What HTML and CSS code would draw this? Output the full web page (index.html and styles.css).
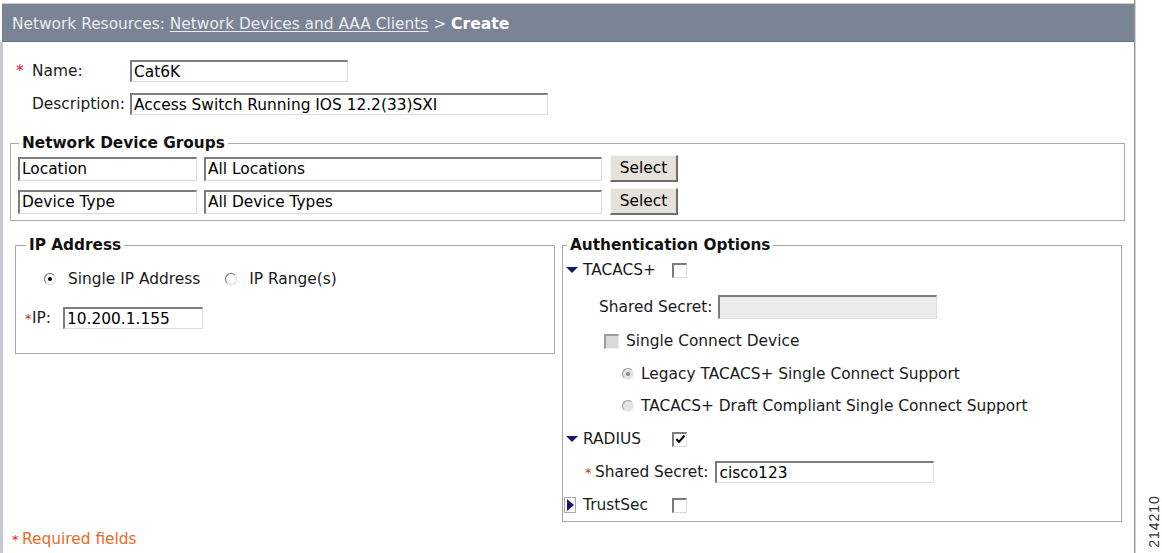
FILE: index.html
```html
<!DOCTYPE html>
<html>
<head>
<meta charset="utf-8">
<link rel="stylesheet" href="styles.css">
</head>
<body>
<div class="frame">
  <div class="header">
    <span class="crumb-label">Network Resources:</span>&nbsp;<span class="crumb-link">Network Devices and AAA Clients</span>&nbsp;<span class="crumb-sep">&gt;</span>&nbsp;<span class="crumb-current">Create</span>
  </div>
  <div class="content">
    <div class="form-row first-row">
      <span class="lbl"><span class="req">*</span>Name:</span>
      <input class="field w-name" value="Cat6K" readonly>
    </div>
    <div class="form-row">
      <span class="lbl"><span class="req"></span>Description:</span>
      <input class="field w-desc" value="Access Switch Running IOS 12.2(33)SXI" readonly>
    </div>

    <fieldset class="box ndg">
      <legend>Network Device Groups</legend>
      <div class="ndg-row">
        <input class="field tall w-grp" value="Location" readonly>
        <input class="field tall w-val" value="All Locations" readonly>
        <span class="btn">Select</span>
      </div>
      <div class="ndg-row">
        <input class="field tall w-grp" value="Device Type" readonly>
        <input class="field tall w-val" value="All Device Types" readonly>
        <span class="btn">Select</span>
      </div>
    </fieldset>

    <div class="columns">
      <fieldset class="box ip">
        <legend>IP Address</legend>
        <div class="radio-row">
          <span class="rb checked"></span><span class="rb-text">Single IP Address</span>
          <span class="rb second"></span><span class="rb-text">IP Range(s)</span>
        </div>
        <div class="ip-row">
          <span class="req small">*</span><span class="ip-lbl">IP:</span>
          <input class="field w-ip" value="10.200.1.155" readonly>
        </div>
      </fieldset>

      <fieldset class="box auth">
        <legend>Authentication Options</legend>
        <div class="opt">
          <svg class="tri" width="12" height="8" viewBox="0 0 12 8"><polygon points="0,1 12,1 6,7" fill="#141b6b"/></svg>
          <span class="proto-name">TACACS+</span>
          <span class="cb"></span>
        </div>
        <div class="opt gap13 indent-secret">
          <span class="secret-lbl">Shared Secret:</span>
          <input class="field tall w-secret disabled" value="" readonly>
        </div>
        <div class="opt gap10 indent-scd">
          <span class="cb disabled"></span>
          <span class="cb-text">Single Connect Device</span>
        </div>
        <div class="opt indent-rb">
          <span class="rb disabled checked"></span>
          <span class="rb-text2">Legacy TACACS+ Single Connect Support</span>
        </div>
        <div class="opt gap8 indent-rb">
          <span class="rb disabled"></span>
          <span class="rb-text2">TACACS+ Draft Compliant Single Connect Support</span>
        </div>
        <div class="opt">
          <svg class="tri" width="12" height="8" viewBox="0 0 12 8"><polygon points="0,1 12,1 6,7" fill="#141b6b"/></svg>
          <span class="proto-name">RADIUS</span>
          <span class="cb checked">
            <svg width="11" height="11" viewBox="0 0 11 11"><polyline points="1.5,5 4,8 9.5,1.5" fill="none" stroke="#000" stroke-width="2"/></svg>
          </span>
        </div>
        <div class="opt indent-radius">
          <span class="req small">*</span><span class="secret-lbl2">Shared Secret:</span>
          <input class="field w-secret" value="cisco123" readonly>
        </div>
        <div class="opt">
          <svg class="tri-r" width="12" height="16" viewBox="0 0 12 16"><rect x="0.5" y="0.5" width="11" height="15" fill="none" stroke="#555" stroke-dasharray="1,1"/><polygon points="3,2 10,8 3,14" fill="#141b6b"/></svg>
          <span class="proto-name">TrustSec</span>
          <span class="cb"></span>
        </div>
      </fieldset>
    </div>

    <div class="required"><span class="req small">*</span>Required fields</div>
  </div>
  <div class="fig-num">214210</div>
</div>
</body>
</html>
```
FILE: styles.css
```css
html, body {
  margin: 0;
  padding: 0;
  background: #ffffff;
}
body {
  font-family: "DejaVu Sans", Verdana, sans-serif;
  font-size: 15.4px;
  color: #1a1a1a;
  width: 1162px;
  height: 553px;
  overflow: hidden;
  position: relative;
}
.frame {
  width: 1135px;
  height: 553px;
  padding-top: 3px;
  box-sizing: border-box;
  border-right: 1px solid #8e9296;
  box-shadow: 1px 0 0 #d2d4d6;
  display: flex;
  flex-direction: column;
}
.header {
  margin-left: 2px;
  height: 39px;
  background: #7b8494;
  border-top: 1px solid #c8ccd2;
  border-bottom: 1px solid #6c7484;
  box-sizing: border-box;
  padding: 3px 0 0 10px;
  display: flex;
  align-items: center;
  color: #e9ecf1;
  white-space: nowrap;
  font-size: 15.4px;
}
.crumb-link { text-decoration: underline; text-underline-offset: 2px; }
.crumb-current { font-weight: bold; color: #ffffff; font-size: 15.6px; }

.content {
  flex: 1;
  border-left: 3px solid #c6cace;
  display: flex;
  flex-direction: column;
}

.form-row {
  display: flex;
  align-items: center;
  height: 22px;
  margin-left: 13px;
  margin-top: 11px;
}
.form-row.first-row { margin-top: 18px; }
.lbl {
  width: 114px;
  display: flex;
  align-items: center;
  white-space: nowrap;
}
.req {
  display: inline-block;
  width: 16px;
  color: #e0221b;
}
.req.small { width: 7px; font-size: 13px; }

.field {
  font-family: "DejaVu Sans", Verdana, sans-serif;
  font-size: 15.4px;
  color: #000;
  height: 22px;
  box-sizing: border-box;
  padding: 0 0 0 2px;
  margin: 0;
  background: #fff;
  border-style: solid;
  border-width: 2px 1px 1px 2px;
  border-color: #7d7d7d #dcdcdc #dcdcdc #7d7d7d;
  outline: none;
  -webkit-appearance: none;
  appearance: none;
  border-radius: 0;
}
.field.tall { height: 24px; }
.field.disabled { background: #ececec; }
.w-name { width: 218px; }
.w-desc { width: 418px; }
.w-grp { width: 179px; }
.w-val { width: 398px; margin-left: 7px; }
.w-ip { width: 140px; }
.w-secret { width: 219px; }

.box {
  border: 1px solid #a5a9ad;
  margin: 0;
  min-width: 0;
}
.box legend {
  font-weight: bold;
  font-size: 15.3px;
  line-height: 18px;
  padding: 0 3px;
  margin-left: 1px;
  color: #111;
}

.ndg {
  margin: 19px 9px 0 7px;
  padding: 0 7px 5px 7px;
}
.ndg-row {
  display: flex;
  align-items: center;
  height: 27px;
}
.ndg-row + .ndg-row { margin-top: 6px; }
.ndg-row:first-of-type { margin-top: 3px; }
.btn {
  margin-left: 8px;
  width: 68px;
  height: 27px;
  box-sizing: border-box;
  display: flex;
  align-items: center;
  justify-content: center;
  background: #e4e2db;
  border-style: solid;
  border-width: 1px 2px 2px 1px;
  border-color: #f6f6f2 #6e6e6e #6e6e6e #f6f6f2;
  color: #000;
}

.columns {
  display: flex;
  align-items: flex-start;
  margin: 15px 0 0 12px;
  gap: 7px;
}
.ip {
  width: 540px;
  box-sizing: border-box;
  padding: 0 9px 24px 9px;
}
.radio-row {
  display: flex;
  align-items: center;
  height: 24px;
  margin-top: 13px;
  padding-left: 19px;
}
.rb {
  width: 12px;
  height: 12px;
  box-sizing: border-box;
  border-radius: 50%;
  border: 1px solid;
  border-color: #6e6e6e #dadada #dadada #6e6e6e;
  background: #fff;
  position: relative;
  flex: none;
}
.rb.checked::after {
  content: "";
  position: absolute;
  left: 3px;
  top: 3px;
  width: 4px;
  height: 4px;
  border-radius: 50%;
  background: #000;
}
.rb.disabled { background: #e4e4e4; border-color: #9a9a9a #f0f0f0 #f0f0f0 #9a9a9a; }
.rb.disabled.checked::after { background: #8a8a8a; }
.rb-text { margin-left: 12px; }
.rb.second { margin-left: 25px; }

.ip-row {
  display: flex;
  align-items: center;
  height: 22px;
  margin-top: 16px;
}
.ip-lbl { width: 31px; }

.auth {
  width: 560px;
  box-sizing: border-box;
  padding: 0 3px 4px 3px;
}
.opt {
  display: flex;
  align-items: center;
  height: 24px;
  margin-top: 9px;
  white-space: nowrap;
}
.opt:first-of-type { margin-top: 4px; }
.opt.gap13 { margin-top: 13px; }
.opt.gap10 { margin-top: 10px; }
.opt.gap8 { margin-top: 8px; }
.tri { flex: none; }
.tri-r { flex: none; margin-left: -2px; margin-right: 2px; }
.proto-name { width: 94px; padding-left: 5px; box-sizing: border-box; }
.cb {
  width: 15px;
  height: 15px;
  box-sizing: border-box;
  border-style: solid;
  border-width: 2px 1px 1px 2px;
  border-color: #7b7b7b #dcdcdc #dcdcdc #7b7b7b;
  background: #fff;
  flex: none;
  display: flex;
  align-items: center;
  justify-content: center;
}
.cb.disabled { background: #d9d9d9; border-color: #9c9c9c #eeeeee #eeeeee #9c9c9c; }
.cb svg { display: block; }
.indent-secret { padding-left: 33px; }
.secret-lbl { margin-right: 6px; }
.indent-scd { padding-left: 38px; }
.cb-text { margin-left: 7px; }
.indent-rb { padding-left: 56px; }
.rb-text2 { margin-left: 7px; }
.indent-radius { padding-left: 19px; }
.indent-radius .req.small { width: 10px; }
.secret-lbl2 { margin-right: 7px; }

.required {
  margin: 8px 0 0 9px;
  color: #ec6a25;
  display: flex;
  align-items: center;
}
.required .req.small { width: 10px; }

.fig-num {
  position: absolute;
  left: 1126px;
  top: 514px;
  width: 56px;
  height: 15px;
  line-height: 15px;
  transform: rotate(-90deg);
  font-family: "Liberation Sans", Arial, sans-serif;
  font-size: 14px;
  letter-spacing: 1px;
  color: #333;
  text-align: center;
}
```
